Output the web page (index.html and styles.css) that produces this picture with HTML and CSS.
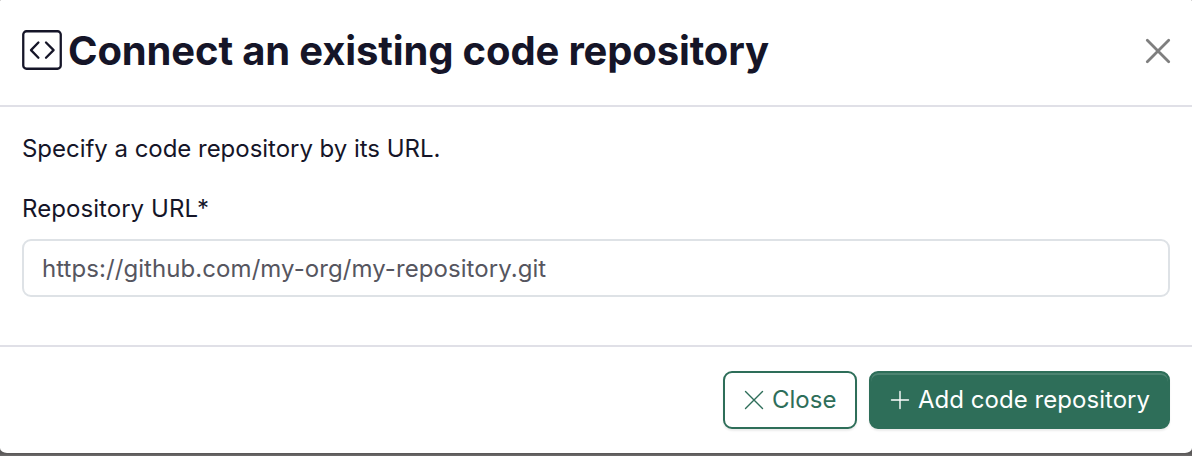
FILE: index.html
```html
<!DOCTYPE html>
<html lang="en">
<head>
<meta charset="utf-8">
<title>Connect an existing code repository</title>
<link rel="stylesheet" href="styles.css">
</head>
<body>
<section class="modal">
  <header class="modal-header">
    <svg class="title-icon" viewBox="0 0 40 40" aria-hidden="true"><rect x="1.25" y="1.25" width="37.5" height="37.5" rx="3.25"/><path d="M16.4 12.5 9 20.1l7.4 7.6M24 12.5l7.6 7.6-7.6 7.6"/></svg>
    <h1 class="title">Connect an existing code repository</h1>
    <button class="dismiss" aria-label="Close dialog"><svg viewBox="0 0 24 24"><path d="M1.3 1.3l21.4 21.4M22.7 1.3L1.3 22.7"/></svg></button>
  </header>
  <main class="modal-body">
    <p class="intro">Specify a code repository by its URL.</p>
    <label class="label" for="url">Repository URL*</label>
    <input class="field" id="url" type="text" placeholder="https://github.com/my-org/my-repository.git">
  </main>
  <footer class="modal-footer">
    <button class="btn btn-outline"><svg class="btn-icon" viewBox="0 0 20 20"><path d="M1.5 1.5l17 17M18.5 1.5l-17 17"/></svg><span>Close</span></button>
    <button class="btn btn-primary"><svg class="btn-icon" viewBox="0 0 20 20"><path d="M10 1.5v17M1.5 10h17"/></svg><span>Add code repository</span></button>
  </footer>
</section>
</body>
</html>
```
FILE: styles.css
```css
* { box-sizing: border-box; }
body { margin: 0; height: 456px; overflow: hidden; background: linear-gradient(#5b5959 454px, #6b6969 455px); color: #151528; font-family: Inter, sans-serif; font-size: 24px; }
svg { display: block; fill: none; stroke: currentColor; stroke-linecap: round; stroke-linejoin: round; }
.modal { height: 453px; display: flex; flex-direction: column; background: #fff; border-radius: 1px 1px 7px 7px / 1px 1px 5px 5px; }
.modal-header { height: 107px; padding: 0 22px 5px; display: flex; align-items: center; border-bottom: 2px solid #e0e0e7; }
.title-icon { width: 40px; height: 40px; stroke-width: 2.3; }
.title { margin: 0 auto 0 6px; padding-top: 2px; font-size: 40px; line-height: 48px; font-weight: 700; letter-spacing: -0.15px; white-space: nowrap; }
.dismiss { padding: 2px 0 0; border: 0; background: none; color: #7f7f7f; }
.dismiss svg { width: 24px; height: 24px; stroke-width: 2.8; overflow: visible; }
.modal-body { height: 238px; padding: 24px 22px; }
.intro { margin: 0 0 24px; line-height: 36px; letter-spacing: -0.03px; }
.label { display: block; margin-bottom: 12px; line-height: 36px; letter-spacing: 0.06px; }
.field { display: block; width: 100%; height: 58px; padding: 0 18px; border: 2px solid #dee2e6; border-radius: 9px; font: inherit; letter-spacing: 0.07px; }
.field::placeholder { color: #56565f; opacity: 1; }
.modal-footer { height: 108px; padding: 24px 22px; display: flex; justify-content: flex-end; gap: 12px; border-top: 2px solid #e0e0e7; }
.btn { height: 58px; padding: 0 19px 2px; display: flex; align-items: center; gap: 8px; border: 2px solid #2e6e59; border-radius: 9px; font: inherit; white-space: nowrap; box-shadow: inset 0 2px 0 rgba(255, 255, 255, .15), 0 2px 2px rgba(0, 0, 0, .075); }
.btn-outline { width: 134px; padding-right: 18px; background: #fff; color: #2e6e59; }
.btn-primary { width: 301px; background: #2e6e59; color: #fff; letter-spacing: 0.04px; }
.btn-icon { width: 20px; height: 20px; flex: none; position: relative; top: 1px; stroke-width: 1.4; }
```
